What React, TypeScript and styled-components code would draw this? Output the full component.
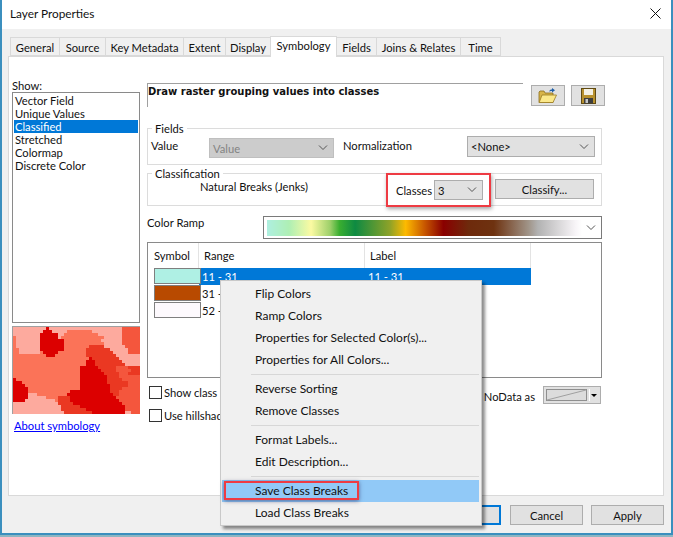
import styled, { createGlobalStyle } from "styled-components";

const GlobalStyle = createGlobalStyle`
  html, body {
    margin: 0;
    padding: 0;
    height: 100%;
    background: #8db6c2;
    overflow: hidden;
  }
  body {
    font-family: "Lato", "Open Sans", sans-serif;
    font-size: 11.2px;
    color: #111;
  }
  * {
    box-sizing: border-box;
  }
`;

const Frame = styled.div`
  position: relative;
  width: 673px;
  height: 535px;
  display: flex;
  flex-direction: column;
  border-left: 2px solid #3b8fbe;
  border-right: 2px solid #3b8fbe;
  border-bottom: 2px solid #3b8fbe;
`;

const TitleBar = styled.div`
  height: 29px;
  flex: none;
  background: #fff;
  display: flex;
  align-items: center;
  justify-content: space-between;
  padding: 0 10px 3px 8px;
  font-size: 11.8px;
`;

const Body = styled.div`
  flex: 1;
  background: #f0f0f0;
  padding: 7px 7px 0 6px;
  display: flex;
  flex-direction: column;
`;

const TabRow = styled.div`
  height: 20px;
  flex: none;
  display: flex;
  align-items: flex-end;
  padding-left: 2px;
  position: relative;
  z-index: 1;
`;

const Tab = styled.div<{ $w: number; $active?: boolean }>`
  width: ${(p) => p.$w}px;
  height: ${(p) => (p.$active ? 21 : 19)}px;
  margin-bottom: ${(p) => (p.$active ? -1 : 0)}px;
  background: ${(p) => (p.$active ? "#fff" : "#f0f0f0")};
  border: 1px solid #d9d9d9;
  border-bottom: ${(p) => (p.$active ? "none" : "1px solid #d9d9d9")};
  margin-right: -1px;
  text-align: center;
  line-height: ${(p) => (p.$active ? 18 : 19)}px;
  white-space: nowrap;
`;

const Panel = styled.div`
  width: 656px;
  height: 440px;
  flex: none;
  background: #fff;
  border: 1px solid #d9d9d9;
  padding: 22px 0 0 3px;
  display: grid;
  grid-template-columns: 128px 456px;
  column-gap: 7px;
  align-items: start;
`;

const LeftCol = styled.div`
  display: flex;
  flex-direction: column;
`;

const ShowLabel = styled.div`
  height: 13px;
  line-height: 13px;
`;

const ListBox = styled.div`
  height: 231px;
  border: 1px solid #8a8a8a;
  padding: 1px;
`;

const ListItem = styled.div<{ $selected?: boolean }>`
  height: 13px;
  line-height: 13px;
  padding-left: 1px;
  background: ${(p) => (p.$selected ? "#0078d7" : "transparent")};
  color: ${(p) => (p.$selected ? "#fff" : "#111")};
`;

const Preview = styled.svg`
  display: block;
  width: 128px;
  height: 88px;
  margin-top: 3px;
  border-top: 1px solid #a0a0a0;
  border-left: 1px solid #a0a0a0;
`;

const AboutLink = styled.a`
  margin: 5px 0 0 2px;
  color: #0000ff;
  text-decoration: underline;
  line-height: 14px;
`;

const RightCol = styled.div`
  padding-top: 4px;
  display: flex;
  flex-direction: column;
`;

const HeadRow = styled.div`
  height: 24px;
  display: flex;
  align-items: flex-start;
`;

const Heading = styled.div`
  width: 376px;
  height: 24px;
  flex: none;
  padding-top: 1px;
  border-top: 1px solid #a0a0a0;
  border-left: 1px solid #a0a0a0;
  font-family: "DejaVu Sans", sans-serif;
  font-weight: bold;
  font-size: 10px;
  line-height: 13px;
  white-space: nowrap;
`;

const IconButton = styled.div<{ $gap: number }>`
  width: 34px;
  height: 21px;
  flex: none;
  margin: 2px 0 0 ${(p) => p.$gap}px;
  background: #e1e1e1;
  border: 1px solid #adadad;
  display: flex;
  align-items: center;
  justify-content: center;
`;

const Group = styled.div<{ $top: number; $h: number }>`
  position: relative;
  width: 455px;
  height: ${(p) => p.$h}px;
  margin-top: ${(p) => p.$top}px;
  border: 1px solid #dcdcdc;
  display: flex;
  align-items: flex-start;
`;

const Legend = styled.div`
  position: absolute;
  left: 4px;
  top: -7px;
  padding: 0 3px;
  background: #fff;
  line-height: 14px;
`;

const FieldLabel = styled.div<{ $w?: number; $left: number; $top: number }>`
  width: ${(p) => (p.$w ? `${p.$w}px` : "auto")};
  margin: ${(p) => p.$top}px 0 0 ${(p) => p.$left}px;
  line-height: 14px;
  white-space: nowrap;
`;

const Select = styled.div<{ $w: number; $h: number; $top?: number; $off?: boolean }>`
  width: ${(p) => p.$w}px;
  height: ${(p) => p.$h}px;
  margin-top: ${(p) => p.$top ?? 0}px;
  flex: none;
  background: ${(p) => (p.$off ? "#cccccc" : "#e1e1e1")};
  border: 1px solid ${(p) => (p.$off ? "#bfbfbf" : "#adadad")};
  color: ${(p) => (p.$off ? "#838383" : "#111")};
  display: flex;
  align-items: center;
  justify-content: space-between;
  padding: 0 5px 0 3px;
`;

const Callout = styled.div`
  margin: -1px 0 0 auto;
  width: 105px;
  height: 34px;
  border: 2px solid #ee3b43;
  box-shadow: 1px 2px 4px rgba(0, 0, 0, 0.35);
  background: #fff;
  display: flex;
  align-items: center;
  justify-content: space-between;
  padding: 0 6px 0 8px;
  position: relative;
`;

const PushButton = styled.div<{ $w: number; $focus?: boolean }>`
  width: ${(p) => p.$w}px;
  height: 20px;
  flex: none;
  background: #e1e1e1;
  border: ${(p) => (p.$focus ? "2px solid #0078d7" : "1px solid #adadad")};
  display: flex;
  align-items: center;
  justify-content: center;
`;

const ClassifyWrap = styled.div`
  margin: 5px 7px 0 4px;
`;

const RampRow = styled.div`
  margin-top: 10px;
  height: 23px;
  width: 455px;
  display: flex;
  align-items: flex-start;
`;

const RampLabel = styled.div`
  width: 116px;
  line-height: 14px;
`;

const RampBox = styled.div`
  width: 339px;
  height: 23px;
  border: 1px solid #7a7a7a;
  padding: 3px 5px 3px 3px;
  display: flex;
  align-items: center;
  justify-content: space-between;
`;

const Ramp = styled.div`
  width: 315px;
  height: 16px;
  background: linear-gradient(
    to right,
    #aeefe0 0%,
    #aeefb4 7%,
    #fbfaa2 14%,
    #9ed06a 20%,
    #3aae30 23%,
    #0e8a42 28%,
    #8ea228 39%,
    #fdba00 44%,
    #c85800 50%,
    #8a0000 56%,
    #6e2a0c 64%,
    #6e3210 72%,
    #a09488 83%,
    #b2b2b2 86%,
    #f8f5f8 98%,
    #ffffff 100%
  );
`;

const ClassTable = styled.div`
  margin-top: 3px;
  width: 455px;
  height: 136px;
  border: 1px solid #8a8a8a;
`;

const HeadCols = styled.div`
  display: grid;
  grid-template-columns: 51px 166px 166px;
  height: 25px;
`;

const HeadCell = styled.div<{ $pad: number }>`
  border-right: 1px solid #e3e3e3;
  padding-left: ${(p) => p.$pad}px;
  line-height: 25px;
`;

const ClassRow = styled.div`
  position: relative;
  height: 17px;
  display: grid;
  grid-template-columns: 51px 166px 166px;
  line-height: 17px;
`;

const Swatch = styled.div<{ $bg: string }>`
  width: 47px;
  height: 16px;
  margin-left: 6px;
  background: ${(p) => p.$bg};
  border: 1px solid #7f7f7f;
  position: relative;
  z-index: 1;
`;

const ClassCell = styled.div<{ $selected?: boolean; $pad: number }>`
  background: ${(p) => (p.$selected ? "#0078d7" : "transparent")};
  color: ${(p) => (p.$selected ? "#fff" : "#111")};
  padding-left: ${(p) => p.$pad}px;
`;

const OptionRow = styled.div<{ $top: number }>`
  margin-top: ${(p) => p.$top}px;
  height: 18px;
  width: 455px;
  display: flex;
  align-items: flex-start;
  padding-left: 2px;
`;

const CheckBox = styled.div`
  width: 13px;
  height: 13px;
  border: 1px solid #333;
  background: #fff;
  flex: none;
`;

// the popup menu cuts these two off in the picture
const OptionText = styled.div`
  width: 56px;
  margin-left: 2px;
  line-height: 14px;
  white-space: nowrap;
  overflow: hidden;
`;

const NoDataLabel = styled.div`
  margin: 4px 0 0 auto;
  line-height: 14px;
  white-space: nowrap;
`;

const NoDataButton = styled.div`
  width: 58px;
  height: 18px;
  margin: 0 1px 0 8px;
  background: #e1e1e1;
  border: 1px solid #adadad;
  display: flex;
  align-items: center;
  padding: 2px;
`;

const NoDataArrow = styled.div`
  flex: 1;
  height: 100%;
  margin-left: 2px;
  border-left: 1px solid #fff;
  display: flex;
  align-items: center;
  justify-content: center;
  &::after {
    content: "";
    border-left: 3px solid transparent;
    border-right: 3px solid transparent;
    border-top: 3px solid #000;
  }
`;

const Footer = styled.div`
  display: flex;
  justify-content: flex-end;
  padding: 9px 0 0;
  width: 656px;
`;

const FooterGap = styled.div<{ $w: number }>`
  width: ${(p) => p.$w}px;
`;

const Menu = styled.div`
  position: absolute;
  left: 218px;
  top: 280px;
  width: 262px;
  height: 246px;
  z-index: 5;
  background: #f0f0f0;
  border: 1px solid #c9c9c9;
  padding: 2px 2px 2px 1px;
  box-shadow: 3px 3px 3px rgba(0, 0, 0, 0.45);
  font-size: 12px;
`;

const MenuItem = styled.div<{ $hot?: boolean }>`
  position: relative;
  height: 22px;
  line-height: 22px;
  padding-left: 33px;
  background: ${(p) => (p.$hot ? "#91c9f7" : "transparent")};
`;

const MenuSep = styled.div`
  height: 1px;
  margin: 3px 0 3px 29px;
  background: #d7d7d7;
`;

const SaveCallout = styled.div`
  position: absolute;
  left: 2px;
  top: 1px;
  width: 135px;
  height: 19px;
  border: 2px solid #ee3b43;
  box-shadow: 0 1px 4px rgba(40, 40, 90, 0.6);
`;

const Chevron = () => (
  <svg width="10" height="6" viewBox="0 0 10 6" fill="none">
    <polyline points="1,0.5 5,4.5 9,0.5" stroke="#555" strokeWidth="1" />
  </svg>
);

const COLORS: Record<string, string> = {
  L: "#fdaa9e",
  M: "#fb7358",
  O: "#f4563d",
  R: "#ea3822",
  D: "#dc0000",
};

// run lengths, one 3px-high band of the preview per line
const MAP_ROWS = [
  "L11 D1 L24 O6",
  "L10 D3 L5 M8 L10 O6",
  "L9 D6 L2 M11 L8 O6",
  "M1 L8 D6 L1 M14 L6 O6",
  "M1 L8 D8 M12 L7 O6",
  "M1 L8 D8 M13 L6 O6",
  "M1 L8 D8 M8 R5 L7 O5",
  "M2 L7 D8 M7 R8 L6 O4",
  "M2 L7 M1 D5 M9 R9 L5 O4",
  "M11 D3 M10 R10 L8",
  "M25 D1 R9 L7",
  "M24 D3 R9 L6",
  "M24 D3 R10 L5",
  "M22 D6 R6 O4 R4",
  "M22 D7 R5 O5 R3",
  "M22 D8 R5 O3 R4",
  "M22 D9 R4 O7",
  "D1 M21 D9 R5 O6",
  "D3 M19 D9 R7 O4",
  "D4 M18 D10 R6 O4",
  "D5 M17 D10 R4 O6",
  "D5 M14 D13 R3 O7",
  "D5 L3 M10 D15 R2 O7",
  "D5 L6 M4 R4 D15 O8",
  "D4 L10 M1 R4 D16 O7",
  "L15 R5 D16 O6",
  "L16 R6 D15 O5",
  "L16 R8 D13 O5",
  "L17 R9 D11 L2 O3",
];

const PreviewMap = () => (
  <Preview viewBox="0 0 126 87" preserveAspectRatio="none" shapeRendering="crispEdges">
    {MAP_ROWS.flatMap((row, r) => {
      let x = 0;
      return row.split(" ").map((run) => {
        const n = Number(run.slice(1));
        const rect = (
          <rect key={`${r}-${x}`} x={x * 3} y={r * 3} width={n * 3} height={3} fill={COLORS[run[0]]} />
        );
        x += n;
        return rect;
      });
    })}
  </Preview>
);

const FolderIcon = () => (
  <svg width="20" height="17" viewBox="0 0 20 17">
    <path d="M1 5 L1 15.5 L15 15.5 L15 6 L7 6 L6 4 L2 4 Z" fill="#d8b448" stroke="#8a6d1c" strokeWidth="0.8" />
    <path d="M1.2 15.5 L4 8 L18.5 8 L15 15.5 Z" fill="#fbe88a" stroke="#9a7b22" strokeWidth="0.8" />
    <path d="M11 4.5 C11.5 3 12.5 2.4 14 2.4 L14 1 L17 3.2 L14 5.4 L14 4 C12.8 3.9 11.8 4.1 11 4.5 Z" fill="#1f5fa8" />
  </svg>
);

const SaveIcon = () => (
  <svg width="15" height="16" viewBox="0 0 15 16">
    <rect x="0.5" y="0.5" width="14" height="15" fill="#b8912e" stroke="#5f4a14" />
    <rect x="3" y="1" width="9" height="6" fill="#f4f1e4" />
    <rect x="3" y="10" width="9" height="5.5" fill="#3d3d3d" />
    <rect x="4.5" y="11" width="2.5" height="4" fill="#c8c8c8" />
  </svg>
);

const NoDataSwatch = () => (
  <svg width="41" height="12" viewBox="0 0 41 12">
    <rect x="0.5" y="0.5" width="40" height="11" fill="#dcdcdc" stroke="#8f8f8f" />
    <line x1="1" y1="11" x2="40" y2="1" stroke="#a0a0a0" />
  </svg>
);

const CloseIcon = () => (
  <svg width="11" height="11" viewBox="0 0 11 11" fill="none">
    <path d="M0.5 0.5 L10.5 10.5 M10.5 0.5 L0.5 10.5" stroke="#111" strokeWidth="1" />
  </svg>
);

const TABS = [
  { label: "General", w: 50 },
  { label: "Source", w: 47 },
  { label: "Key Metadata", w: 79 },
  { label: "Extent", w: 43 },
  { label: "Display", w: 46 },
  { label: "Symbology", w: 67, active: true },
  { label: "Fields", w: 41 },
  { label: "Joins & Relates", w: 85 },
  { label: "Time", w: 41 },
];

const SHOW_ITEMS = ["Vector Field", "Unique Values", "Classified", "Stretched", "Colormap", "Discrete Color"];

const CLASSES = [
  { color: "#aff0e4", range: "11 - 31", label: "11 - 31" },
  { color: "#b84a00", range: "31 - " },
  { color: "#fdf9fd", range: "52 - " },
];

export default function App() {
  return (
    <>
      <GlobalStyle />
      <Frame>
        <TitleBar>
          <span>Layer Properties</span>
          <CloseIcon />
        </TitleBar>
        <Body>
          <TabRow>
            {TABS.map((t) => (
              <Tab key={t.label} $w={t.w} $active={t.active}>
                {t.label}
              </Tab>
            ))}
          </TabRow>
          <Panel>
            <LeftCol>
              <ShowLabel>Show:</ShowLabel>
              <ListBox>
                {SHOW_ITEMS.map((item) => (
                  <ListItem key={item} $selected={item === "Classified"}>
                    {item}
                  </ListItem>
                ))}
              </ListBox>
              <PreviewMap />
              <AboutLink href="#">About symbology</AboutLink>
            </LeftCol>
            <RightCol>
              <HeadRow>
                <Heading>Draw raster grouping values into classes</Heading>
                <IconButton $gap={8}>
                  <FolderIcon />
                </IconButton>
                <IconButton $gap={6}>
                  <SaveIcon />
                </IconButton>
              </HeadRow>
              <Group $top={21} $h={37}>
                <Legend>Fields</Legend>
                <FieldLabel $w={58} $left={3} $top={10}>
                  Value
                </FieldLabel>
                <Select $w={125} $h={20} $top={9} $off>
                  Value
                  <Chevron />
                </Select>
                <FieldLabel $w={124} $left={9} $top={10}>
                  Normalization
                </FieldLabel>
                <Select $w={128} $h={21} $top={7}>
                  {"<None>"}
                  <Chevron />
                </Select>
              </Group>
              <Group $top={8} $h={33}>
                <Legend>Classification</Legend>
                <FieldLabel $left={52} $top={6}>
                  Natural Breaks (Jenks)
                </FieldLabel>
                <Callout>
                  Classes
                  <Select $w={49} $h={20}>
                    3
                    <Chevron />
                  </Select>
                </Callout>
                <ClassifyWrap>
                  <PushButton $w={99}>Classify...</PushButton>
                </ClassifyWrap>
              </Group>
              <RampRow>
                <RampLabel>Color Ramp</RampLabel>
                <RampBox>
                  <Ramp />
                  <Chevron />
                </RampBox>
              </RampRow>
              <ClassTable>
                <HeadCols>
                  <HeadCell $pad={6}>Symbol</HeadCell>
                  <HeadCell $pad={5}>Range</HeadCell>
                  <HeadCell $pad={5}>Label</HeadCell>
                </HeadCols>
                {CLASSES.map((c, i) => (
                  <ClassRow key={c.range}>
                    <Swatch $bg={c.color} />
                    <ClassCell $pad={3} $selected={i === 0}>
                      {c.range}
                    </ClassCell>
                    <ClassCell $pad={3} $selected={i === 0}>
                      {c.label}
                    </ClassCell>
                  </ClassRow>
                ))}
              </ClassTable>
              <OptionRow $top={8}>
                <CheckBox />
                <OptionText>Show class breaks</OptionText>
                <NoDataLabel>NoData as</NoDataLabel>
                <NoDataButton>
                  <NoDataSwatch />
                  <NoDataArrow />
                </NoDataButton>
              </OptionRow>
              <OptionRow $top={5}>
                <CheckBox />
                <OptionText>Use hillshade</OptionText>
              </OptionRow>
            </RightCol>
          </Panel>
          <Footer>
            <PushButton $w={73} $focus>
              OK
            </PushButton>
            <FooterGap $w={9} />
            <PushButton $w={73}>Cancel</PushButton>
            <FooterGap $w={8} />
            <PushButton $w={73}>Apply</PushButton>
          </Footer>
        </Body>
        <Menu>
          <MenuItem>Flip Colors</MenuItem>
          <MenuItem>Ramp Colors</MenuItem>
          <MenuItem>Properties for Selected Color(s)...</MenuItem>
          <MenuItem>Properties for All Colors...</MenuItem>
          <MenuSep />
          <MenuItem>Reverse Sorting</MenuItem>
          <MenuItem>Remove Classes</MenuItem>
          <MenuSep />
          <MenuItem>Format Labels...</MenuItem>
          <MenuItem>Edit Description...</MenuItem>
          <MenuSep />
          <MenuItem $hot>
            Save Class Breaks
            <SaveCallout />
          </MenuItem>
          <MenuItem>Load Class Breaks</MenuItem>
        </Menu>
      </Frame>
    </>
  );
}
